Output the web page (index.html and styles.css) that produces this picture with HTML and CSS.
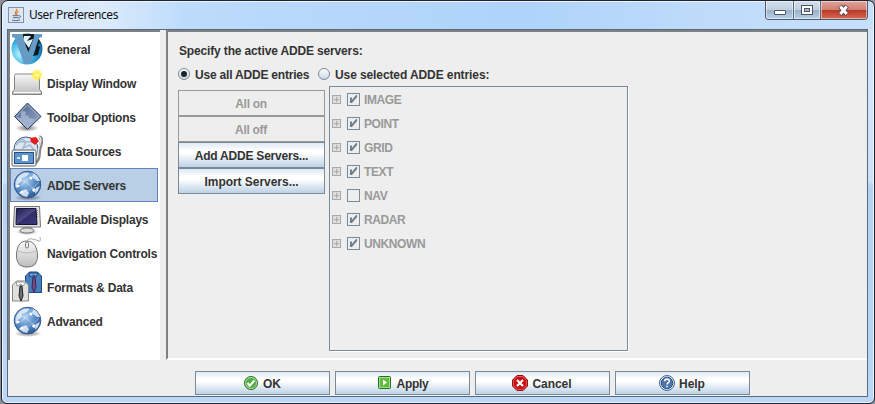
FILE: index.html
```html
<!DOCTYPE html>
<html lang="en">
<head>
<meta charset="utf-8">
<title>User Preferences</title>
<link rel="stylesheet" href="styles.css">
</head>
<body>
<svg class="defs" width="0" height="0">
  <defs>
    <linearGradient id="silver" x1="0" y1="0" x2="0" y2="1"><stop offset="0" stop-color="#f8f8f8"/><stop offset="1" stop-color="#bdbdbd"/></linearGradient>
    <linearGradient id="navy" x1="0" y1="0" x2="1" y2="1"><stop offset="0" stop-color="#1e1d48"/><stop offset=".5" stop-color="#4d4a88"/><stop offset=".52" stop-color="#302e67"/><stop offset="1" stop-color="#3e3c7c"/></linearGradient>
    <radialGradient id="sea" cx=".4" cy=".35" r=".65"><stop offset="0" stop-color="#b4d4f2"/><stop offset=".6" stop-color="#5a8dc8"/><stop offset="1" stop-color="#315c99"/></radialGradient>
    <radialGradient id="cyan" cx=".3" cy=".65" r=".8"><stop offset="0" stop-color="#c5f6ff"/><stop offset=".45" stop-color="#3fb8ea"/><stop offset=".8" stop-color="#1c7fb4"/><stop offset="1" stop-color="#0b4a68"/></radialGradient>
    <radialGradient id="sun"><stop offset="0" stop-color="#fffbc0"/><stop offset=".45" stop-color="#fff04a"/><stop offset="1" stop-color="#ffee30" stop-opacity="0"/></radialGradient>
    <radialGradient id="shade"><stop offset="0" stop-color="#333" stop-opacity=".65"/><stop offset="1" stop-color="#333" stop-opacity="0"/></radialGradient>
    <linearGradient id="slate" x1="0" y1="0" x2="1" y2="1"><stop offset="0" stop-color="#4a628e"/><stop offset="1" stop-color="#9aabc8"/></linearGradient>
    <symbol id="globe" viewBox="0 0 32 32">
      <ellipse cx="17" cy="28.500" rx="14" ry="3.500" fill="url(#shade)"/>
      <circle cx="16.500" cy="15.500" r="13.300" fill="url(#sea)" stroke="#35598f"/>
      <path d="M4.500 13Q7 5 14 3.500l5 .5-3 3-5 2-1 4-3 2-1 4-1.500-1zM22 4q5 2 7 8l-3 0-5-4zM10 22l5-2 3 4-2 4q-5-1-8-4zM25 19l4-2-2 5-3 3z" fill="#e3effa" opacity=".85"/>
      <path d="M5 18Q15 16 21 4M8 24Q20 22 28 13M6 10Q18 12 25 24" fill="none" stroke="#fff" opacity=".35"/>
      <g fill="#fff"><circle cx="7" cy="17" r="1.300"/><circle cx="20" cy="9" r="1.500"/><circle cx="23" cy="21" r="1.800"/><circle cx="11" cy="23" r="1.300"/></g>
    </symbol>
  </defs>
</svg>
<div class="window">
  <header class="titlebar">
    <svg class="java" viewBox="0 0 16 16"><rect x=".5" y=".5" width="15" height="15" fill="#dfe5ee" stroke="#8592a5"/><path d="M8.500 2c1.500 2-3 3.200-.6 6M10.500 4.500C8 6 8.500 6.500 9 8" fill="none" stroke="#e8792b" stroke-width="1.300"/><path d="M4.500 8.700h6.200M5 10.700h5.500M4 13c2 .9 6 .9 8-.2M11 8.700c2.500-.2 1.500 2-.3 2.500" fill="none" stroke="#4d6f93"/></svg>
    <span class="title">User Preferences</span>
    <div class="controls">
      <span class="ctl min"><svg width="14" height="18"><rect x="1.500" y="9.500" width="11" height="4" rx=".5" fill="#fff" stroke="#4d5665"/></svg></span>
      <span class="ctl max"><svg width="12" height="18"><rect x=".5" y="4.500" width="11" height="9" fill="#fff" stroke="#4d5665"/><rect x="3.500" y="7.500" width="5" height="3" fill="#a5b9d0" stroke="#4d5665"/></svg></span>
      <span class="ctl close"><svg width="14" height="18"><path d="M3 5l7 8.500M10 5L3 13.500" stroke="#61423f" stroke-width="5"/><path d="M3.300 5.500l6.400 7.500M9.700 5.500l-6.400 7.500" stroke="#fff" stroke-width="3"/></svg></span>
    </div>
  </header>
  <main class="client">
    <div class="split">
      <nav class="side">
        <div class="item"><svg viewBox="0 0 32 32"><circle cx="16" cy="16" r="15.500" fill="url(#cyan)"/><path d="M9 1h16l4 8-10 14z" fill="#111b24"/><path d="M13 3l7 0-4 5 6-2-4 9-6-8z" fill="#e4f4fa"/><path d="M26 12l3 2-2 8-5 1z" fill="#0c1822"/><path d="M1 1h11v3l5 16 6-16V1h8v3l-3 1-9 26h-6L4 5 1 4z" fill="#659bc4"/></svg><span>General</span></div>
        <div class="item"><svg viewBox="0 0 32 32"><path d="M1.500 24.500l2-2V8.500q0-1.500 2-1.500h21q2 0 2 2v13.500l2 2v3h-29z" fill="url(#silver)" stroke="#858585"/><path d="M3 25.500h26" stroke="#fafafa"/><circle cx="26" cy="8" r="6.500" fill="url(#sun)"/></svg><span>Display Window</span></div>
        <div class="item"><svg viewBox="0 0 32 32"><ellipse cx="16" cy="27" rx="12" ry="4" fill="url(#shade)"/><path d="M16.500 2L30 15.500 16.500 28.500 3.500 15.500z" fill="url(#slate)" stroke="#2c3c61"/><path d="M12 10l3 1-1 4 3-1 1 3 6 1-8 9-11-11 5 1v-5z" fill="#a9b9d3" opacity=".8"/><path d="M16.500 3.800L28.200 15.500 16.500 26.800 5.300 15.500z" fill="none" stroke="#aebbd2"/></svg><span>Toolbar Options</span></div>
        <div class="item"><svg viewBox="0 0 32 32"><circle cx="15" cy="14" r="12" fill="#dce6f2" stroke="#355b91"/><path d="M5 10l6-6 4 3-3 6 7-3 4 5M7 6q9 2 17 0" fill="none" stroke="#a4b8cf" stroke-width="1.500"/><path d="M28 2q4 1 2 7t-2 11-5 9" fill="none" stroke="#888" stroke-width="3.500"/><path d="M28 2q3 1 1 7t-2 10-4 8" fill="none" stroke="#e6e6e6" stroke-width="1.500"/><path d="M19 3l6-1 3 4-4 4-4-3z" fill="#e51c20"/><rect x="1" y="15" width="24" height="16" rx="1.500" fill="#f1f1ed" stroke="#5b6269"/><rect x="3.500" y="17.500" width="19" height="11" fill="#5d94cb" stroke="#1e4e8c"/><path d="M6 23h3" stroke="#fff" stroke-width="1.500"/><rect x="11" y="20" width="6" height="6" fill="#fff"/></svg><span>Data Sources</span></div>
        <div class="item selected"><svg viewBox="0 0 32 32"><use href="#globe"/></svg><span>ADDE Servers</span></div>
        <div class="item"><svg viewBox="0 0 32 32"><ellipse cx="16" cy="29" rx="11" ry="3" fill="url(#shade)"/><path d="M12 24h9l1 4H10z" fill="#bbb"/><ellipse cx="16" cy="27.500" rx="7" ry="2.500" fill="#ddd" stroke="#777"/><path d="M3.500 3.500h25l1 20.500h-27z" fill="#e2e2df" stroke="#777"/><path d="M5.500 5.500h19.500l1 16H5z" fill="url(#navy)" stroke="#17163d"/><path d="M26.500 7v7" stroke="#999" stroke-dasharray="1 1"/></svg><span>Available Displays</span></div>
        <div class="item"><svg viewBox="0 0 32 32"><path d="M16 5q0-4 5-3t7 2 1-4" fill="none" stroke="#aaa"/><ellipse cx="16" cy="27" rx="11" ry="4" fill="url(#shade)"/><path d="M15.500 4C8 4 5.500 11 5.500 19c0 7 4 11 10.500 11s10.500-4 10.500-11c0-8-3-15-11-15z" fill="url(#silver)" stroke="#727272"/><path d="M7 14q8 4 18 0" fill="none" stroke="#bbb"/><rect x="14.500" y="5" width="3" height="6" rx="1.500" fill="#eee" stroke="#777"/></svg><span>Navigation Controls</span></div>
        <div class="item"><svg viewBox="0 0 32 32"><path d="M14.500 5l4-4h8l4 4v16.500h-16z" fill="#477fbd" stroke="#1f4784"/><path d="M18 2h9l-2 4-2-2-4 2z" fill="#7ba7d6" stroke="#1f4784"/><path d="M22 6h2l1 11-2 4-2-4z" fill="#754b83" stroke="#3b2457"/><path d="M1.500 14l4-4h8l4 4v16h-16z" fill="#e1e1df" stroke="#858585"/><path d="M5 11h10l-3 4-2-2-4 2z" fill="#fff" stroke="#999"/><path d="M9 15h2l1 10-2 5-2-5z" fill="#6b7170" stroke="#222"/></svg><span>Formats &amp; Data</span></div>
        <div class="item"><svg viewBox="0 0 32 32"><use href="#globe"/></svg><span>Advanced</span></div>
      </nav>
      <section class="panel">
        <h1>Specify the active ADDE servers:</h1>
        <div class="radios">
          <label class="radio on"><i></i><span class="r1">Use all ADDE entries</span></label>
          <label class="radio"><i></i><span class="r2">Use selected ADDE entries:</span></label>
        </div>
        <div class="servers">
          <div class="actions">
            <button class="btn wide" disabled>All on</button>
            <button class="btn wide" disabled>All off</button>
            <button class="btn">Add ADDE Servers...</button>
            <button class="btn import">Import Servers...</button>
          </div>
          <div class="tree">
            <div class="node"><b class="plus"></b><i class="box checked"></i><span>IMAGE</span></div>
            <div class="node"><b class="plus"></b><i class="box checked"></i><span>POINT</span></div>
            <div class="node"><b class="plus"></b><i class="box checked"></i><span>GRID</span></div>
            <div class="node"><b class="plus"></b><i class="box checked"></i><span>TEXT</span></div>
            <div class="node"><b class="plus"></b><i class="box"></i><span>NAV</span></div>
            <div class="node"><b class="plus"></b><i class="box checked"></i><span>RADAR</span></div>
            <div class="node"><b class="plus"></b><i class="box checked"></i><span>UNKNOWN</span></div>
          </div>
        </div>
      </section>
    </div>
    <footer class="footer">
      <button class="btn"><svg viewBox="0 0 16 16"><circle cx="8" cy="8" r="6.600" fill="#55ad49" stroke="#39813a"/><circle cx="8" cy="8" r="5.500" fill="none" stroke="#a9d99b"/><path d="M4.500 8l2.300 2.700 4.500-5" fill="none" stroke="#fff" stroke-width="2"/></svg>OK</button>
      <button class="btn apply"><svg viewBox="0 0 16 16"><rect x="2.500" y="1.500" width="12" height="12" rx="1" fill="#62bd3f" stroke="#23702a"/><rect x="3.500" y="2.500" width="10" height="10" fill="none" stroke="#a5df89"/><path d="M7 4.500l4 3-4 3z" fill="#fff"/></svg>Apply</button>
      <button class="btn"><svg viewBox="0 0 16 16"><path d="M5 .5h6L15.500 5v6L11 15.500H5L.5 11V5z" fill="#cb1015" stroke="#970d12"/><path d="M5.300 1.500h5.400l3.800 3.800v5.400l-3.800 3.800H5.300l-3.800-3.800V5.300z" fill="none" stroke="#e85b5c"/><path d="M5 5l6 6M11 5l-6 6" stroke="#fff" stroke-width="2.200"/></svg>Cancel</button>
      <button class="btn"><svg viewBox="0 0 16 16"><circle cx="8" cy="8" r="7.500" fill="#e9f0f8" stroke="#42648f"/><circle cx="8" cy="8" r="5.800" fill="#4c76aa" stroke="#2e568e"/><path d="M5.700 6.300c0-3 4.800-2.800 4.600-.2 0 1.600-2.200 1.500-2.200 3.400M8.100 10.700v1.600" fill="none" stroke="#fff" stroke-width="1.600"/></svg>Help</button>
    </footer>
  </main>
</div>
</body>
</html>
```
FILE: styles.css
```css
* { box-sizing: border-box; }
body { margin: 0; width: 875px; height: 404px; overflow: hidden; background: #8c9096; font: bold 12px/14px "Liberation Sans", Arial, sans-serif; color: #333; }
.defs { position: absolute; }
.window { width: 874px; height: 404px; margin-left: 1px; border: 1px solid #20232f; border-radius: 7px 7px 6px 6px; padding: 0 6px 6px 5px; background: linear-gradient(#d5e7fa 0, #cde1f8 45%, #b5d2f4 46%, #bad7f7 100%); box-shadow: inset 0 0 0 1px #edf6ff; display: flex; flex-direction: column; }
.titlebar { height: 27px; flex: none; display: flex; align-items: flex-start; margin: 1px -5px 0 -4px; padding-left: 5px; border-radius: 5px 5px 0 0; background: linear-gradient(90deg, #d8e8fa 0, #dcebfb 100px, #bddcfb 180px, #b9d9fb 260px, #afd3fa 520px, #c0dcfa 720px, #c6dffa 100%); }
.java { width: 16px; height: 16px; margin-top: 5px; }
.title { font: 12px/16px "Noto Sans", sans-serif; color: #111; margin: 5px 0 0 5px; letter-spacing: -.45px; white-space: nowrap; }
.controls { display: flex; margin: -1px 5px 0 auto; width: 103px; height: 19px; border: 1px solid #4c5b70; border-top: 0; border-radius: 0 0 4px 4px; overflow: hidden; }
.ctl { display: flex; justify-content: center; background: linear-gradient(#d2dfed 0, #c0cfdf 48%, #9cb1c8 52%, #b9d0e6 100%); box-shadow: inset 0 0 0 1px rgba(255,255,255,.5); }
.min { width: 28px; border-right: 1px solid #596a80; }
.max { width: 27px; border-right: 1px solid #596a80; }
.close { width: 46px; background: linear-gradient(#e1a39a 0, #d08073 48%, #ba3928 52%, #d66b50 100%); }
.client { flex: 1; min-height: 0; background: #eee; border: 1px solid #59697e; display: flex; flex-direction: column; }
.split { height: 330px; flex: none; display: flex; gap: 6px; }
.side { width: 152px; background: #fff; border: 2px solid #7e8184; border-right: 0; border-bottom: 0; }
.item { height: 34px; width: 148px; border: 1px solid transparent; display: flex; align-items: center; white-space: nowrap; }
.item svg { width: 32px; height: 32px; flex: none; }
.item span { margin: 1px 0 0 4px; letter-spacing: -.2px; }
.item.selected { background: #b8cfe5; border-color: #6382bf; }
.panel { flex: 1; border: 2px solid #7e8184; border-right: 0; border-bottom: 2px solid #fff; padding: 12px 0 0 10px; }
h1 { font: inherit; margin: 0 0 0 1px; letter-spacing: -.15px; }
.radios { display: flex; height: 14px; margin-top: 9px; }
.radio { display: flex; align-items: center; width: 140px; white-space: nowrap; }
.radio i { width: 12px; height: 12px; border: 1px solid #7a8a99; border-radius: 50%; background: linear-gradient(#fff, #c4d7e9); flex: none; display: flex; align-items: center; justify-content: center; }
.radio span { margin: 2px 0 0 5px; letter-spacing: -.2px; }
.radio .r2 { letter-spacing: -.1px; }
.radio.on i::after { content: ""; width: 6px; height: 6px; border-radius: 50%; background: #222; }
.servers { display: flex; align-items: flex-start; gap: 4px; margin-top: 5px; }
.actions { width: 147px; display: flex; flex-direction: column; padding-top: 4px; }
.btn { font: inherit; color: #333; border: 1px solid #7a8a99; padding: 0; margin: 0; border-radius: 0; background: linear-gradient(#dfe9f3 0, #fff 32%, #fff 42%, #bdd2e5 100%); display: flex; justify-content: center; align-items: center; letter-spacing: -.22px; }
.actions .btn { height: 26px; padding-top: 1px; }
.btn.wide { letter-spacing: -.3px; padding-right: 1px; }
.btn.import { letter-spacing: -.04px; }
.btn:disabled { color: #999; border-color: #999; background: #eee; }
.tree { width: 299px; height: 265px; border: 1px solid #7a8a99; box-shadow: 1px 1px #fff; padding: 1px 2px; color: #999; letter-spacing: -.4px; }
.node { height: 24px; display: flex; align-items: center; }
.plus { width: 9px; height: 9px; margin-bottom: 1px; border: 1px solid #aaa; background: linear-gradient(#aaa, #aaa) center/5px 1px no-repeat, linear-gradient(#aaa, #aaa) center/1px 5px no-repeat, #ddd; }
.box { width: 13px; height: 13px; border: 1px solid #7a8a99; margin: 0 4px 1px 6px; display: block; }
.box.checked::after { content: ""; display: block; width: 7px; height: 8px; margin: 1px 0 0 2px; background: #6f7f8e; clip-path: polygon(0 30%, 28% 30%, 28% 62%, 85% 0, 100% 0, 100% 28%, 28% 100%, 0 100%); }
.footer { display: flex; gap: 5px; padding: 11px 0 0 187px; }
.footer .btn { width: 135px; height: 24px; padding: 1px 1px 0 0; letter-spacing: -.05px; }
.footer svg { width: 16px; height: 16px; margin-right: 4px; margin-top: -1px; }
.footer .apply { letter-spacing: -.3px; }
.footer .apply svg { margin-right: 5px; }
```
